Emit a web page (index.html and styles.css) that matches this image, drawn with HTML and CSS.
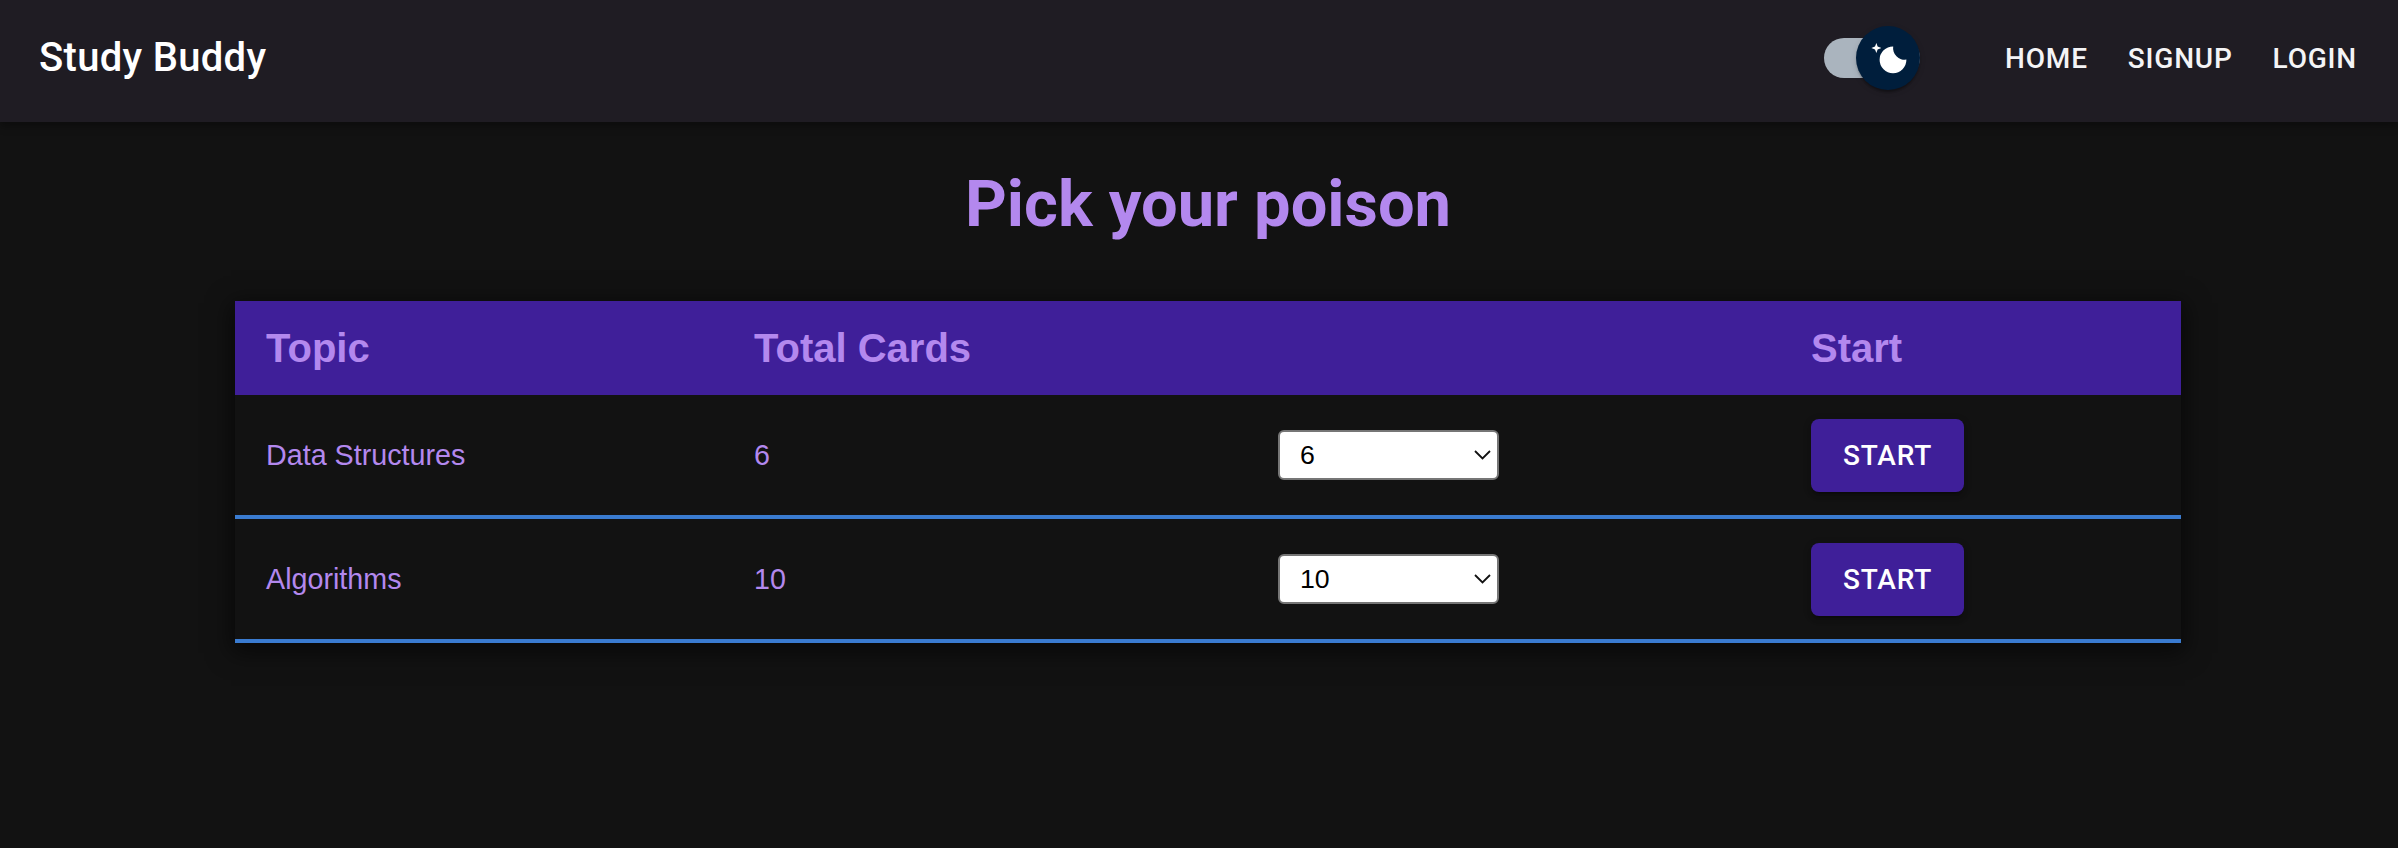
FILE: index.html
```html
<!DOCTYPE html>
<html lang="en">
<head>
<meta charset="utf-8">
<title>Study Buddy</title>
<link rel="stylesheet" href="styles.css">
</head>
<body>
<header class="appbar">
  <div class="brand">Study Buddy</div>
  <div class="spacer"></div>
  <span class="switch" role="switch" aria-checked="true">
    <span class="track"></span>
    <span class="thumb">
      <svg class="moon" width="40" height="40" viewBox="0 0 20 20"><path fill="#fff" d="M4.2 2.5l-.7 1.8-1.8.7 1.8.7.7 1.8.6-1.8L6.7 5l-1.9-.7-.6-1.8zm15 8.3a6.7 6.7 0 11-6.6-6.6 5.8 5.8 0 006.6 6.6z"/></svg>
    </span>
  </span>
  <nav class="links">
    <a class="link" href="#">Home</a>
    <a class="link" href="#">Signup</a>
    <a class="link" href="#">Login</a>
  </nav>
</header>
<main class="page">
  <h1 class="title">Pick your poison</h1>
  <div class="table-wrap">
    <table class="topics">
      <thead>
        <tr>
          <th class="c-topic">Topic</th>
          <th class="c-total">Total Cards</th>
          <th class="c-count"></th>
          <th class="c-start">Start</th>
        </tr>
      </thead>
      <tbody>
        <tr>
          <td>Data Structures</td>
          <td>6</td>
          <td>
            <span class="select-wrap">
              <select class="count"><option>6</option><option>5</option><option>4</option></select>
              <svg class="chev" width="17" height="10" viewBox="0 0 17 10"><polyline points="1,1 8.5,8.5 16,1" fill="none" stroke="#111" stroke-width="1.8"/></svg>
            </span>
          </td>
          <td><button class="start">Start</button></td>
        </tr>
        <tr>
          <td>Algorithms</td>
          <td>10</td>
          <td>
            <span class="select-wrap">
              <select class="count"><option>10</option><option>9</option><option>8</option></select>
              <svg class="chev" width="17" height="10" viewBox="0 0 17 10"><polyline points="1,1 8.5,8.5 16,1" fill="none" stroke="#111" stroke-width="1.8"/></svg>
            </span>
          </td>
          <td><button class="start">Start</button></td>
        </tr>
      </tbody>
    </table>
  </div>
</main>
</body>
</html>
```
FILE: styles.css
```css
* { box-sizing: border-box; }
html, body { margin: 0; padding: 0; }
body {
  background: #121212;
  min-height: 848px;
  font-family: Roboto, "Liberation Sans", Arial, sans-serif;
  color: #fff;
}
.appbar {
  height: 122px;
  display: flex;
  align-items: center;
  padding: 0 21px 6px 39px;
  background: #1f1c23;
  box-shadow: 0 4px 8px rgba(0,0,0,0.35);
  position: relative;
  z-index: 1;
}
.brand {
  font-family: Roboto, sans-serif;
  font-weight: 500;
  font-size: 40px;
  line-height: 1.6;
  color: #fff;
  letter-spacing: 0.3px;
}
.spacer { flex: 1; }
.switch {
  position: relative;
  display: block;
  width: 124px;
  height: 68px;
  padding: 14px;
  flex: none;
  margin-right: 51px;
}
.track {
  display: block;
  width: 96px;
  height: 40px;
  border-radius: 20px;
  background: #aab4be;
}
.thumb {
  position: absolute;
  left: 46px;
  top: 2px;
  width: 64px;
  height: 64px;
  border-radius: 50%;
  background: #001e3c;
  display: flex;
  align-items: center;
  justify-content: center;
  box-shadow: 0 4px 2px -2px rgba(0,0,0,.2), 0 2px 2px 0 rgba(0,0,0,.14), 0 2px 6px 0 rgba(0,0,0,.12);
}
.moon { display: block; }
.links { display: flex; }
.link {
  font-family: Roboto, sans-serif;
  font-weight: 500;
  font-size: 28px;
  line-height: 49px;
  letter-spacing: 0.8px;
  text-transform: uppercase;
  color: #f4f4f6;
  text-decoration: none;
  padding: 0 20px;
}
.page {
  padding: 44px 0 0 18px;
}
.title {
  margin: 0 0 59px;
  text-align: center;
  font-family: Roboto, sans-serif;
  font-weight: 700;
  font-size: 65px;
  line-height: 76px;
  color: #b388ee;
}
.table-wrap {
  width: 1946px;
  margin: 0 auto;
  box-shadow: 0 6px 22px 4px rgba(0,0,0,0.55);
}
.topics {
  width: 1946px;
  table-layout: fixed;
  border-collapse: separate;
  border-spacing: 0;
  font-family: "Liberation Sans", Arial, sans-serif;
  color: #b388ee;
}
.c-topic { width: 488px; }
.c-total { width: 523px; }
.c-count { width: 533px; }
.c-start { width: 402px; }
.topics th {
  height: 94px;
  padding: 0 31px;
  background: #3f1f99;
  text-align: left;
  font-weight: 700;
  font-size: 40px;
  vertical-align: middle;
}
.topics td {
  height: 124px;
  padding: 0 31px;
  border-bottom: 4px solid #3a7bd0;
  font-size: 28.7px;
  vertical-align: middle;
  background: #121212;
}
.topics td:nth-child(3),
.topics td:nth-child(4) { padding-left: 32px; }
.topics th.c-start { padding-left: 32px; }
.select-wrap {
  position: relative;
  display: inline-block;
  vertical-align: middle;
}
.count {
  display: block;
  appearance: none;
  -webkit-appearance: none;
  width: 221px;
  height: 50px;
  border: 2px solid #767676;
  border-radius: 6px;
  background: #fff;
  color: #000;
  font-family: "Liberation Sans", Arial, sans-serif;
  font-size: 26.7px;
  padding: 0 0 0 20px;
  margin: 0;
}
.chev {
  position: absolute;
  right: 8px;
  top: 20px;
  pointer-events: none;
}
.start {
  display: inline-block;
  vertical-align: middle;
  height: 73px;
  padding: 12px 32px;
  border: 0;
  border-radius: 8px;
  background: #3f1f99;
  color: #fff;
  font-family: Roboto, sans-serif;
  font-weight: 500;
  font-size: 28px;
  line-height: 49px;
  letter-spacing: 0.8px;
  text-transform: uppercase;
  box-shadow: 0 6px 2px -4px rgba(0,0,0,.2), 0 4px 4px 0 rgba(0,0,0,.14), 0 2px 10px 0 rgba(0,0,0,.12);
}
```
